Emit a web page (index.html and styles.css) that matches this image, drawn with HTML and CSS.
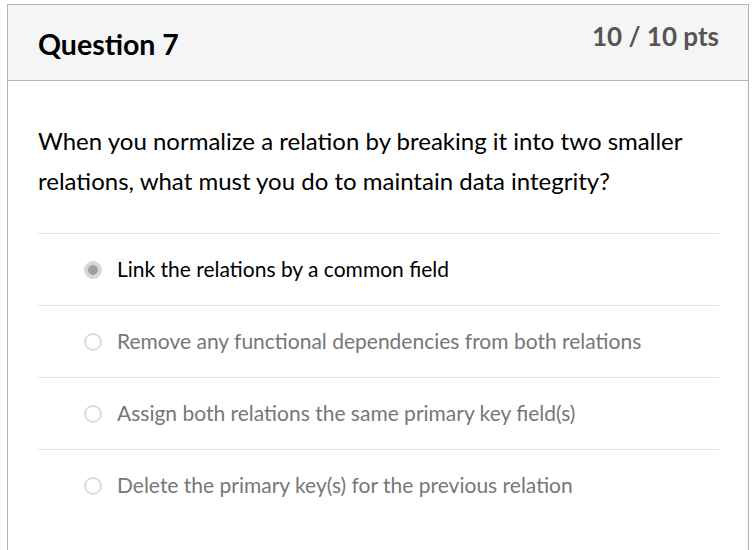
FILE: index.html
```html
<!DOCTYPE html>
<html lang="en">
<head>
<meta charset="utf-8">
<title>Question 7</title>
<link rel="stylesheet" href="styles.css">
</head>
<body>
<div class="card">
  <div class="card-header">
    <h2 class="title">Question 7</h2>
    <div class="points">10 / 10 pts</div>
  </div>
  <div class="card-body">
    <p class="question">When you normalize a relation by breaking it into two smaller relations, what must you do to maintain data integrity?</p>
    <ul class="answers">
      <li class="answer selected"><span class="radio"></span><span class="label">Link the relations by a common field</span></li>
      <li class="answer"><span class="radio"></span><span class="label">Remove any functional dependencies from both relations</span></li>
      <li class="answer"><span class="radio"></span><span class="label">Assign both relations the same primary key field(s)</span></li>
      <li class="answer"><span class="radio"></span><span class="label">Delete the primary key(s) for the previous relation</span></li>
    </ul>
  </div>
</div>
</body>
</html>
```
FILE: styles.css
```css
html, body {
  margin: 0;
  background: #ffffff;
}
body {
  padding: 4px 3px 0 7px;
  font-family: Lato, "Open Sans", sans-serif;
  height: 550px;
  box-sizing: border-box;
  overflow: hidden;
}
.card {
  border: 1px solid #b4b4b4;
  border-bottom: none;
  height: 560px;
}
.card-header {
  background: #f5f5f5;
  border-bottom: 1px solid #b4b4b4;
  height: 75px;
  display: flex;
  justify-content: space-between;
  padding: 0 29px 0 30px;
}
.title {
  margin: 0;
  font-size: 28.5px;
  font-weight: 700;
  color: #000;
  align-self: center;
  line-height: 1;
  padding-top: 4px;
}
.points {
  font-size: 26px;
  font-weight: 700;
  color: #555555;
  line-height: 1;
  padding-top: 18px;
}
.card-body {
  padding: 40px 29px 0 30px;
}
.question {
  margin: 0 0 32px;
  font-size: 24px;
  line-height: 40px;
  color: #000;
}
.answers {
  list-style: none;
  margin: 0;
  padding: 0;
}
.answer {
  border-top: 1px solid #e4e4e4;
  height: 71px;
  display: flex;
  align-items: center;
  padding-left: 46px;
  font-size: 21px;
  color: #777777;
}
.answer.selected {
  color: #000;
}
.radio {
  width: 18px;
  height: 18px;
  border-radius: 50%;
  border: 2px solid #dcdce0;
  box-sizing: border-box;
  margin-right: 15px;
  flex: none;
  background: #fff;
}
.answer.selected .radio {
  border: 3px solid #d8d8dc;
  background: radial-gradient(circle, #a0a0a6 0 4.5px, #c8c8cd 5px, #d8d8dc 6px);
}
.label {
  line-height: 1;
  padding-bottom: 2px;
}
```
